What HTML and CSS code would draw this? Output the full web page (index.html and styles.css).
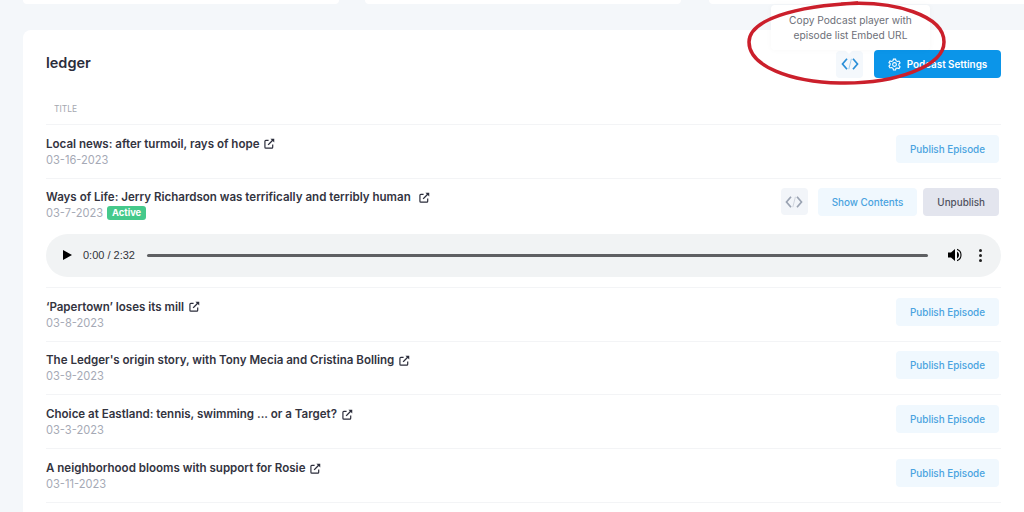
FILE: index.html
```html
<!DOCTYPE html>
<html lang="en">
<head>
  <meta charset="UTF-8">
  <title>Podcast episodes</title>
  <link rel="stylesheet" href="styles.css">
</head>
<body>
  <svg width="0" height="0" class="defs">
    <symbol id="ext" viewBox="0 0 12 12">
      <path d="M5 2.500H2a1 1 0 0 0-1 1V10a1 1 0 0 0 1 1h6.500a1 1 0 0 0 1-1V7" fill="none" stroke="currentColor" stroke-width="1.300"/>
      <path d="M4.500 7.500 10 2" fill="none" stroke="currentColor" stroke-width="1.500"/>
      <path d="M7 .8h4.200V5z" fill="currentColor"/>
    </symbol>
    <symbol id="code" viewBox="0 0 18 12">
      <path d="M6 .8 1.500 6 6 11.200M12 .8 16.500 6 12 11.200" fill="none" stroke="currentColor" stroke-width="1.700"/>
      <path d="M10.400 .8 7.800 11.200" fill="none" stroke="currentColor" stroke-width=".8" opacity=".5"/>
    </symbol>
  </svg>

  <div class="top-cards">
    <div class="top-card"></div>
    <div class="top-card"></div>
    <div class="top-card"></div>
  </div>

  <div class="card">
    <div class="card-head">
      <h2>ledger</h2>
      <div class="actions">
        <span class="code-btn blue"><svg width="18" height="12"><use href="#code"/></svg></span>
        <button class="btn primary">
          <svg width="13" height="13" viewBox="0 0 24 24" fill="none" stroke="currentColor" stroke-width="2"><circle cx="12" cy="12" r="3.500"/><path d="M10 2h4l.7 3 2.600 1.500 3-.9 2 3.400-2.200 2.100v3l2.200 2.100-2 3.400-3-.9L14.700 19 14 22h-4l-.7-3-2.600-1.500-3 .9-2-3.400 2.200-2.100v-3L1.700 8.800l2-3.400 3 .9L9.300 5z"/></svg>
          Podcast Settings
        </button>
      </div>
    </div>
    <div class="col-title">TITLE</div>

    <div class="row">
      <div class="info">
        <div class="ep-title">Local news: after turmoil, rays of hope <svg class="ext" width="11" height="11"><use href="#ext"/></svg></div>
        <div class="ep-date">03-16-2023</div>
      </div>
      <button class="btn light">Publish Episode</button>
    </div>

    <div class="row active">
      <div class="row-main">
        <div class="info">
          <div class="ep-title">Ways of Life: Jerry Richardson was terrifically and terribly human <svg class="ext wide" width="11" height="11"><use href="#ext"/></svg></div>
          <div class="ep-date">03-7-2023 <span class="badge">Active</span></div>
        </div>
        <div class="actions tight">
          <span class="code-btn grey"><svg width="18" height="12"><use href="#code"/></svg></span>
          <button class="btn light">Show Contents</button>
          <button class="btn muted">Unpublish</button>
        </div>
      </div>
      <div class="player">
        <svg class="play" width="9" height="10" viewBox="0 0 9 10"><path d="M0 0l9 5-9 5z"/></svg>
        <span class="time">0:00 / 2:32</span>
        <span class="track"></span>
        <svg class="vol" width="14" height="14" viewBox="0 0 14 14"><path d="M0 4.500h3L7 1v12L3 9.500H0z"/><path d="M9 3.500a4 4 0 0 1 0 7zM9 .8a6.500 6.500 0 0 1 0 12.400v-1.300a5.200 5.200 0 0 0 0-9.800z"/></svg>
        <span class="dots"><i></i><i></i><i></i></span>
      </div>
    </div>

    <div class="row">
      <div class="info">
        <div class="ep-title">‘Papertown’ loses its mill <svg class="ext" width="11" height="11"><use href="#ext"/></svg></div>
        <div class="ep-date">03-8-2023</div>
      </div>
      <button class="btn light">Publish Episode</button>
    </div>

    <div class="row">
      <div class="info">
        <div class="ep-title">The Ledger's origin story, with Tony Mecia and Cristina Bolling <svg class="ext" width="11" height="11"><use href="#ext"/></svg></div>
        <div class="ep-date">03-9-2023</div>
      </div>
      <button class="btn light">Publish Episode</button>
    </div>

    <div class="row">
      <div class="info">
        <div class="ep-title">Choice at Eastland: tennis, swimming ... or a Target? <svg class="ext" width="11" height="11"><use href="#ext"/></svg></div>
        <div class="ep-date">03-3-2023</div>
      </div>
      <button class="btn light">Publish Episode</button>
    </div>

    <div class="row">
      <div class="info">
        <div class="ep-title">A neighborhood blooms with support for Rosie <svg class="ext" width="11" height="11"><use href="#ext"/></svg></div>
        <div class="ep-date">03-11-2023</div>
      </div>
      <button class="btn light">Publish Episode</button>
    </div>
  </div>

  <!-- tooltip and hand drawn marker sit over the card -->
  <div class="tooltip">Copy Podcast player with<br>episode list Embed URL</div>
  <svg class="marker" width="210" height="90" viewBox="0 0 210 90">
    <path d="M95 4C150 0 198 16 198 42c0 24-48 42-104 41C44 82 3 66 3 42 3 20 48 6 112 3" fill="none" stroke="#cb1f2b" stroke-width="3.500"/>
  </svg>
</body>
</html>
```

FILE: styles.css
```css
* {
  box-sizing: border-box;
}

html, body {
  height: 512px;
  overflow: hidden;
}

body {
  margin: 0;
  background: #f4f7fa;
  font-family: "Inter", "Open Sans", sans-serif;
  color: #2b2d3b;
  position: relative;
}

.defs {
  position: absolute;
}

.top-cards {
  display: flex;
  gap: 26px;
  height: 4px;
  padding-left: 23px;
}

.top-card {
  flex: none;
  width: 316px;
  background: white;
  border-radius: 0 0 6px 6px;
}

.top-card:last-child {
  margin-left: 2px;
  width: 340px;
}

.card {
  margin: 26px 0 0 23px;
  padding: 0 23px;
  background: white;
  border-radius: 8px 0 0 0;
  height: 482px;
}

.card-head {
  display: flex;
  justify-content: space-between;
  align-items: center;
  height: 64px;
  padding-top: 4px;
}

h2 {
  margin: 0 0 4px;
  font-size: 14.500px;
  font-weight: 600;
}

.actions {
  display: flex;
  align-items: center;
  gap: 11px;
}

.actions.tight {
  gap: 10px;
  padding-right: 2px;
  margin-bottom: 2px;
}

.actions.tight .muted {
  margin-left: -4px;
}

.code-btn {
  display: flex;
  align-items: center;
  justify-content: center;
  width: 27px;
  height: 27px;
  border-radius: 4px;
  background: #f4f8fc;
}

.code-btn.blue {
  color: #2a8fd8;
}

.code-btn.grey {
  color: #9aa3b2;
  background: #f2f5f9;
}

.btn {
  display: flex;
  align-items: center;
  justify-content: center;
  gap: 6px;
  height: 28px;
  border: none;
  border-radius: 4px;
  font-family: inherit;
  font-size: 9.900px;
  font-weight: 500;
  padding: 0 14px;
  white-space: nowrap;
}

.btn.primary {
  width: 127px;
  padding: 0;
  background: #0b95e9;
  color: white;
  font-weight: 600;
}

.btn.light {
  background: #f0f8fe;
  color: #4aa3e0;
}

.row > .btn.light {
  margin-bottom: 5px;
}

.btn.muted {
  background: #e3e5ee;
  color: #50525f;
}

.col-title {
  height: 31px;
  padding-left: 8px;
  font-size: 8.500px;
  line-height: 30px;
  color: #a5a8b0;
  border-bottom: 1px solid #f3f4f6;
}

.row {
  display: flex;
  justify-content: space-between;
  align-items: center;
  height: 53.800px;
  padding-right: 2px;
  border-bottom: 1px solid #f3f4f6;
}

.row.active {
  display: block;
  height: 109px;
  padding-right: 0;
}

.row > .info {
  margin-top: 1px;
}

.row-main {
  display: flex;
  justify-content: space-between;
  align-items: center;
  height: 48px;
}

.row-main .info {
  margin-top: 5px;
}

.ep-title {
  display: flex;
  align-items: center;
  gap: 5px;
  font-size: 11.550px;
  font-weight: 600;
  line-height: 16px;
  color: #33343f;
}

.ext {
  color: #2b2d3b;
}

.ext.wide {
  margin-left: 3px;
}

.ep-date {
  display: flex;
  align-items: center;
  gap: 4px;
  font-size: 11.100px;
  line-height: 16px;
  color: #a5a9b5;
}

.badge {
  background: #45c98b;
  color: white;
  font-size: 9.300px;
  font-weight: 700;
  line-height: 14px;
  padding: 0 5px;
  border-radius: 3px;
}

.player {
  display: flex;
  align-items: center;
  height: 43px;
  margin-top: 7px;
  padding: 0 19px 0 17px;
  border-radius: 22px;
  background: #f1f3f4;
  color: #222;
}

.play {
  margin-right: 11px;
}

.time {
  font-family: "Liberation Sans", sans-serif;
  font-size: 11px;
  color: #33343a;
  margin-right: 12px;
  white-space: nowrap;
}

.track {
  flex: 1;
  height: 3px;
  border-radius: 2px;
  background: #5e5f62;
  margin-right: 20px;
}

.vol {
  margin-right: 17px;
}

.dots {
  display: flex;
  flex-direction: column;
  gap: 2px;
}

.dots i {
  width: 3px;
  height: 3px;
  border-radius: 50%;
  background: #222;
}

.tooltip {
  position: absolute;
  left: 771px;
  top: 5px;
  width: 159px;
  height: 45px;
  padding-top: 8px;
  background: white;
  border-radius: 4px;
  box-shadow: 0 0 6px rgba(0, 0, 0, 0.03);
  font-size: 10.200px;
  line-height: 15px;
  text-align: center;
  color: #6d6f78;
}

.tooltip::after {
  content: "";
  position: absolute;
  left: 74px;
  bottom: -4px;
  border: 4px solid transparent;
  border-top-color: white;
  border-bottom: none;
}

.marker {
  position: absolute;
  left: 746px;
  top: 0;
}
```
